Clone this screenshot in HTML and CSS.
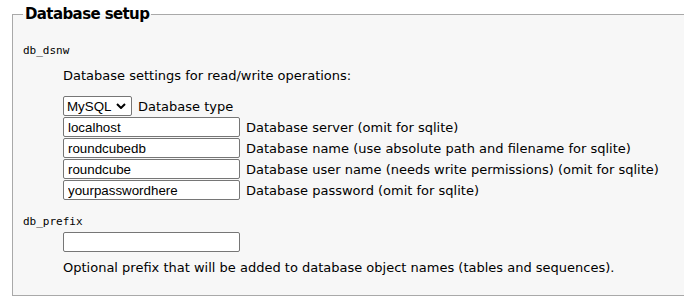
FILE: index.html
```html
<!DOCTYPE html>
<html lang="en">
<head>
  <meta charset="UTF-8">
  <title>Roundcube Installer - Database setup</title>
  <link rel="stylesheet" href="styles.css">
</head>
<body>
  <fieldset class="setup">
    <legend>Database setup</legend>
    <dl class="config">
      <dt class="propname first">db_dsnw</dt>
      <dd>
        <p class="hint">Database settings for read/write operations:</p>
        <div class="row">
          <select class="db-type">
            <option>MySQL</option>
            <option>PgSQL</option>
            <option>SQLite</option>
          </select>
          <label>Database type</label>
        </div>
        <div class="row">
          <input type="text" value="localhost">
          <label>Database server (omit for sqlite)</label>
        </div>
        <div class="row">
          <input type="text" value="roundcubedb">
          <label>Database name (use absolute path and filename for sqlite)</label>
        </div>
        <div class="row">
          <input type="text" value="roundcube">
          <label>Database user name (needs write permissions) (omit for sqlite)</label>
        </div>
        <div class="row">
          <input type="text" value="yourpasswordhere">
          <label>Database password (omit for sqlite)</label>
        </div>
      </dd>

      <dt class="propname">db_prefix</dt>
      <dd>
        <div class="row">
          <input type="text" value="">
        </div>
        <div class="note">Optional prefix that will be added to database object names (tables and sequences).</div>
      </dd>
    </dl>
  </fieldset>
</body>
</html>
```

FILE: styles.css
```css
body {
  font-family: 'DejaVu Sans', Verdana, sans-serif;
  font-size: 13px;
  color: #000;
  background: #fff;
  margin: 0;
  padding: 0 0 0 12px;
}

/* fieldset runs off the right side of the window, so no right border */
.setup {
  margin: 5px 0 0 0;
  padding: 0 10px 20px 10px;
  border: 1px solid #a9a9a9;
  border-right: none;
  background-color: #f7f7f7;
}
.setup legend {
  font-size: 15px;
  font-weight: bold;
  letter-spacing: -0.6px;
  padding: 0 2px;
}

.config {
  margin: 0;
}
.propname {
  font-family: 'DejaVu Sans Mono', monospace;
  font-size: 11px;
  margin: 15px 0 4px 0;
}
.propname.first {
  margin: 21px 0 11px 0;
}
.config dd {
  margin: 0 0 0 40px;
}

.hint {
  margin: 0 0 13px 0;
}

.row {
  display: flex;
  align-items: center;
  margin-bottom: 1px;
}
.row label {
  padding-left: 6px;
  white-space: nowrap;
}

.row input {
  width: 177px;
  height: 20px;
  box-sizing: border-box;
  margin: 0;
  padding: 1px 4px;
  border: 1px solid #767676;
  border-radius: 2px;
  background: #fff;
  font-family: 'Liberation Sans', Arial, sans-serif;
  font-size: 13.33px;
  color: #000;
}

.db-type {
  -webkit-appearance: none;
  appearance: none;
  width: 69px;
  height: 20px;
  margin: 0;
  padding: 0 0 0 3px;
  border: 1px solid #767676;
  border-radius: 2px;
  background: #fff url("data:image/svg+xml,%3Csvg xmlns='http://www.w3.org/2000/svg' width='10' height='6' viewBox='0 0 10 6'%3E%3Cpath d='M1 1l4 4 4-4' fill='none' stroke='%23000' stroke-width='2'/%3E%3C/svg%3E") no-repeat right 5px center;
  font-family: 'Liberation Sans', Arial, sans-serif;
  font-size: 13.33px;
  color: #000;
}

.note {
  margin-top: 8px;
}
```
